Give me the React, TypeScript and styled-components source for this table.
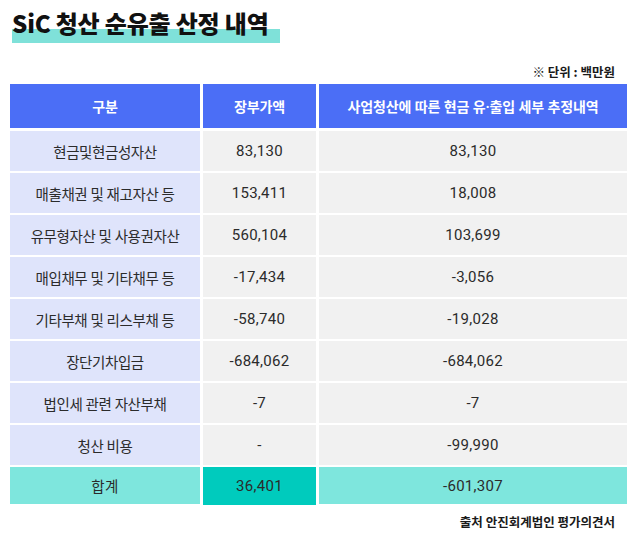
import React from 'react';
import styled, { createGlobalStyle } from 'styled-components';

type CellKind = 'head' | 'label' | 'value' | 'total' | 'highlight';

type Row = { label: string; book: string; cash: string };

const rows: Row[] = [
  { label: '현금및현금성자산', book: '83,130', cash: '83,130' },
  { label: '매출채권 및 재고자산 등', book: '153,411', cash: '18,008' },
  { label: '유무형자산 및 사용권자산', book: '560,104', cash: '103,699' },
  { label: '매입채무 및 기타채무 등', book: '-17,434', cash: '-3,056' },
  { label: '기타부채 및 리스부채 등', book: '-58,740', cash: '-19,028' },
  { label: '장단기차입금', book: '-684,062', cash: '-684,062' },
  { label: '법인세 관련 자산부채', book: '-7', cash: '-7' },
  { label: '청산 비용', book: '-', cash: '-99,990' }
];

const GlobalStyle = createGlobalStyle`
  body {
    margin: 0;
    background: #ffffff;
    font-family: Roboto, 'Noto Sans CJK KR', sans-serif;
    color: #2b2b2b;
  }
`;

const Page = styled.div`
  width: 640px;
  height: 533px;
  padding: 8px 0 0 0;
  box-sizing: border-box;
`;

const Title = styled.h1`
  display: inline-block;
  margin: 0 0 0 12px;
  padding: 0 11px 5px 0;
  font-family: 'Noto Sans CJK KR', sans-serif;
  font-size: 24px;
  line-height: 30px;
  font-weight: 900;
  letter-spacing: -0.2px;
  color: #111111;
  background: linear-gradient(to bottom, transparent 21px, #7fe1d9 21px);
`;

const SmallNote = styled.div<{ $gap: number }>`
  margin: ${p => p.$gap}px 25px 0 0;
  text-align: right;
  font-family: 'Noto Sans CJK KR', sans-serif;
  font-size: 12.5px;
  line-height: 18px;
  font-weight: 700;
  letter-spacing: 0;
  color: #1a1a1a;
`;

const Table = styled.div`
  display: flex;
  flex-direction: column;
  gap: 2px;
  margin: 3px 0 0 10px;
  width: 617px;
`;

const TableRow = styled.div<{ $head?: boolean; $total?: boolean }>`
  display: grid;
  grid-template-columns: 190px 113px 308px;
  column-gap: 3px;
  height: ${p => (p.$head ? '44px' : p.$total ? '37px' : '40px')};
  margin-bottom: ${p => (p.$head ? '1px' : '0')};
`;

const bg: Record<CellKind, string> = {
  head: '#4b6ef6',
  label: '#dfe4fb',
  value: '#f1f1f1',
  total: '#7ee6dd',
  highlight: '#00cbbd'
};

const Cell = styled.div<{ $kind: CellKind }>`
  display: flex;
  align-items: center;
  justify-content: center;
  background: ${p => bg[p.$kind]};
  color: ${p => (p.$kind === 'head' ? '#ffffff' : '#2b2b2b')};
  font-size: ${p => (p.$kind === 'head' ? '14px' : '14.5px')};
  font-weight: ${p => (p.$kind === 'head' ? 700 : 400)};
  letter-spacing: ${p => (p.$kind === 'label' ? '-0.4px' : p.$kind === 'head' ? '-0.1px' : '0.3px')};
  white-space: nowrap;
  margin-bottom: ${p => (p.$kind === 'highlight' ? '-1px' : '0')};
`;

const Num = styled.span`
  font-size: 15px;
`;

export default function App() {
  return (
    <Page>
      <GlobalStyle />
      <Title>SiC 청산 순유출 산정 내역</Title>
      <SmallNote $gap={20}>※ 단위 : 백만원</SmallNote>
      <Table>
        <TableRow $head>
          <Cell $kind="head">구분</Cell>
          <Cell $kind="head">장부가액</Cell>
          <Cell $kind="head">사업청산에 따른 현금 유·출입 세부 추정내역</Cell>
        </TableRow>
        {rows.map(r => (
          <TableRow key={r.label}>
            <Cell $kind="label">{r.label}</Cell>
            <Cell $kind="value"><Num>{r.book}</Num></Cell>
            <Cell $kind="value"><Num>{r.cash}</Num></Cell>
          </TableRow>
        ))}
        <TableRow $total>
          <Cell $kind="total">합계</Cell>
          <Cell $kind="highlight"><Num>36,401</Num></Cell>
          <Cell $kind="total"><Num>-601,307</Num></Cell>
        </TableRow>
      </Table>
      <SmallNote $gap={9}>출처 안진회계법인 평가의견서</SmallNote>
    </Page>
  );
}
